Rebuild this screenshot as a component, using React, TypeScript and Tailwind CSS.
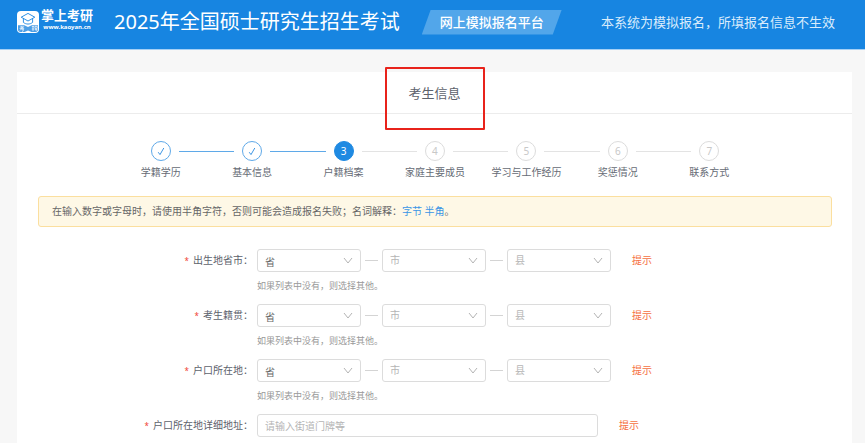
import { useState } from "react";

interface Step {
  id: number;
  title: string;
}

interface RegionField {
  name: string;
  label: string;
}

const steps: Step[] = [
  { id: 1, title: "学籍学历" },
  { id: 2, title: "基本信息" },
  { id: 3, title: "户籍档案" },
  { id: 4, title: "家庭主要成员" },
  { id: 5, title: "学习与工作经历" },
  { id: 6, title: "奖惩情况" },
  { id: 7, title: "联系方式" },
];

const regionFields: RegionField[] = [
  { name: "birthplace", label: "出生地省市" },
  { name: "origin", label: "考生籍贯" },
  { name: "household", label: "户口所在地" },
];

const Logo = () => (
  <a href="#" className="box-content flex w-[97px] shrink-0 items-center gap-[2px] pl-[17px]">
    <svg width="22" height="22" viewBox="0 0 22 22" aria-hidden="true" className="shrink-0">
      <rect width="22" height="22" rx="4" fill="#fff" />
      <path
        d="M11 2.4 17.8 6.2 11 10 4.2 6.2Z M6.4 7.8v3.6c2.6 2.2 6.6 2.2 9.2 0V7.8"
        fill="none"
        stroke="#1785e1"
        strokeWidth="0.9"
        strokeLinejoin="round"
      />
      <path
        d="M1 14.2h6.4L11 16l3.6-1.8H21v4A2.8 2.8 0 0 1 18.2 21H14.4L11 19.4 7.6 21H3.8A2.8 2.8 0 0 1 1 18.2Z"
        fill="#4d9fe6"
      />
      <path
        d="M3 16h3.6M4.8 15v2.2M2.6 17.4h4.6M6.8 15.4 3 19.4M4.6 18.4h2l-.6 1.8h-1M14.8 15.6h2.4M16 15v5M14.8 18h2.4M18 15.4h2.2v2H18ZM17.8 18.4h2.6M19.2 18.4v1.8"
        fill="none"
        stroke="#fff"
        strokeWidth="0.7"
      />
    </svg>
    <span className="flex flex-col gap-px pb-1 text-white">
      <span className="text-[13px] leading-[13px] font-bold">掌上考研</span>
      <span className="text-center font-['Noto_Sans',sans-serif] text-[6px] leading-[8px] font-bold">www.kaoyan.cn</span>
    </span>
  </a>
);

const StepBar = ({ current }: { current: number }) => (
  <ol className="mx-auto flex w-full max-w-[640px]">
    {steps.map((s, i) => {
      const done = s.id < current;
      const active = s.id === current;
      return (
        <li key={s.id} className="flex flex-1 basis-0 flex-col items-center">
          <div className="flex w-full items-center gap-2">
            <span className={`h-px flex-1 ${i === 0 ? "" : s.id <= current ? "bg-[#5fa9e8]" : "bg-[#e3e3e3]"}`} />
            <span
              className={`flex size-5 items-center justify-center rounded-full border text-[10px] leading-none ${
                active
                  ? "border-[#1f8ae2] bg-[#1f8ae2] text-white"
                  : done
                    ? "border-[#5fa9e8] text-[#3f97e4]"
                    : "border-[#dcdcdc] text-[#c8c8c8]"
              }`}
            >
              {done ? (
                <svg width="8" height="9" viewBox="0 0 8 9" aria-hidden="true">
                  <path d="M1.2 5.2 3 7.6 6.8 1" fill="none" stroke="currentColor" strokeWidth="1" />
                </svg>
              ) : (
                s.id
              )}
            </span>
            <span
              className={`h-px flex-1 ${
                i === steps.length - 1 ? "" : done ? "bg-[#5fa9e8]" : "bg-[#e3e3e3]"
              }`}
            />
          </div>
          <span className="mt-1 text-[10px] leading-[14px] whitespace-nowrap text-[#666b75]">{s.title}</span>
        </li>
      );
    })}
  </ol>
);

interface RegionSelectProps {
  id: string;
  placeholder: string;
  disabled?: boolean;
}

const RegionSelect = ({ id, placeholder, disabled }: RegionSelectProps) => (
  <div className="relative w-[104px]">
    <select
      id={id}
      aria-label={placeholder}
      disabled={disabled}
      className={`block h-[23px] w-full appearance-none rounded-[3px] border border-[#dcdcdc] bg-white pl-[7px] text-[10px] opacity-100 ${
        disabled ? "text-[#b5b5b5]" : "pt-[3px] text-[#666666]"
      }`}
    >
      <option>{placeholder}</option>
    </select>
    <svg
      width="10"
      height="7"
      viewBox="0 0 10 7"
      aria-hidden="true"
      className="pointer-events-none absolute top-2 right-2"
    >
      <path d="M1 1 5 6 9 1" fill="none" stroke="#b4b4b4" strokeWidth="1" />
    </svg>
  </div>
);

const FieldLabel = ({ htmlFor, text }: { htmlFor: string; text: string }) => (
  <label
    htmlFor={htmlFor}
    className="w-[219px] shrink-0 pr-1 text-right text-[10px] leading-[23px] text-[#5d626c]"
  >
    <span className="mr-1 text-[8px] text-[#f04134]">*</span>
    {text}：
  </label>
);

const Tip = () => (
  <button type="button" className="ml-[21px] text-[10px] leading-[23px] text-[#f5703f]">
    提示
  </button>
);

const Dash = () => <span className="mx-1 h-px w-[13px] bg-[#d4d4d4]" />;

const App = () => {
  const [address, setAddress] = useState("");

  return (
    <div className="flex min-h-screen flex-col bg-[#f7f7f7] font-['Noto_Sans','Noto_Sans_CJK_SC',sans-serif]">
      {/* Header */}
      <header className="flex h-[50px] items-center border-b border-[#a5d0f5] bg-[#1785e1] pb-[5px] whitespace-nowrap text-white">
        <Logo />
        <h1 className="text-[20px] leading-6">2025年全国硕士研究生招生考试</h1>
        <span className="ml-[22px] bg-[#52a6ea] px-[18px] text-[13px] leading-[25px] font-medium [clip-path:polygon(9px_0,100%_0,calc(100%-9px)_100%,0_100%)]">
          网上模拟报名平台
        </span>
        <p className="ml-auto pr-[30px] text-[13px] leading-5 text-[#d9ecfc]">
          本系统为模拟报名，所填报名信息不生效
        </p>
      </header>

      {/* Content */}
      <main className="mt-[22px] mr-[13px] ml-[17px] flex-1 bg-white">
        <div className="relative border-b border-[#ececec] text-center">
          <h2 className="pt-px text-[13px] leading-10 text-[#5d626c]">考生信息</h2>
          <div className="pointer-events-none absolute -top-[5px] left-1/2 h-[63px] w-[100px] -translate-x-1/2 rounded-[1px] border-2 border-[#e8231b]" />
        </div>

        <div className="pt-[27px] pr-5 pl-[21px]">
          <StepBar current={3} />

          <div className="mt-[17px] rounded-[3px] border border-[#fbdf9f] bg-[#fef8e6] px-[13px] text-[10px] leading-[29px] text-[#666666]">
            在输入数字或字母时，请使用半角字符，否则可能会造成报名失败；名词解释：
            <a href="#" className="text-[#3a95e5]">
              字节
            </a>{" "}
            <a href="#" className="text-[#3a95e5]">
              半角
            </a>
            。
          </div>

          <form className="mt-[22px]">
            {regionFields.map((f) => (
              <div key={f.name} className="flex h-[55px]">
                <FieldLabel htmlFor={`${f.name}-province`} text={f.label} />
                <div>
                  <div className="flex items-center">
                    <RegionSelect id={`${f.name}-province`} placeholder="省" />
                    <Dash />
                    <RegionSelect id={`${f.name}-city`} placeholder="市" disabled />
                    <Dash />
                    <RegionSelect id={`${f.name}-county`} placeholder="县" disabled />
                    <Tip />
                  </div>
                  <p className="mt-2 text-[9px] leading-3 text-[#999999]">如果列表中没有，则选择其他。</p>
                </div>
              </div>
            ))}

            <div className="flex">
              <FieldLabel htmlFor="address" text="户口所在地详细地址" />
              <input
                id="address"
                type="text"
                value={address}
                onChange={(e) => setAddress(e.target.value)}
                placeholder="请输入街道门牌等"
                className="h-[23px] w-[341px] rounded-[3px] border border-[#dcdcdc] px-[7px] text-[10px] text-[#666666] placeholder:text-[#b5b5b5]"
              />
              <Tip />
            </div>
          </form>
        </div>
      </main>
    </div>
  );
};

export default App;
